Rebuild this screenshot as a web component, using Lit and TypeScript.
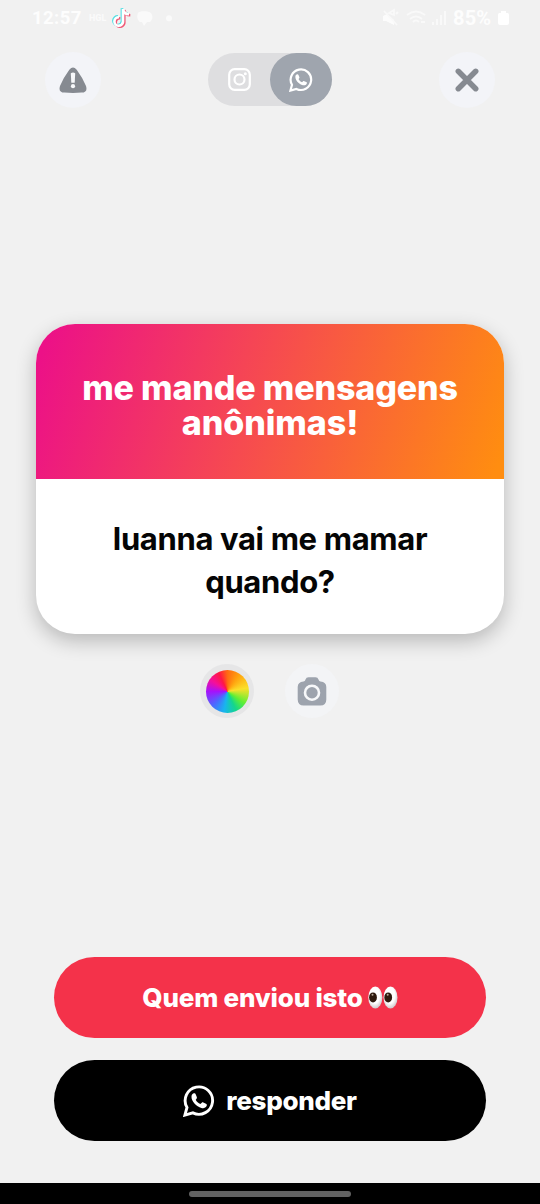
import { LitElement, html, css, svg } from "lit";
import { customElement } from "lit/decorators.js";

const whatsapp = svg`
  <path d="M1.9 30.1 L4 22.4 A13.7 13.7 0 1 1 9.9 27.9 Z" fill="none" stroke="#fff" stroke-width="2.9" stroke-linejoin="miter"/>
  <path d="M8.5 11.2 C8.7 9.5 9.7 8.3 11 8.2 C12 8.1 12.4 8.5 12.8 9.5 L13.8 12 C14.2 13 13.8 13.5 12.7 14.8 C13.7 16.8 15.3 18.2 17.4 19.1 L18.8 17.7 C19.2 17.3 19.7 17.2 20.3 17.5 L23 18.8 C24 19.3 24.1 20 23.6 21 C22.6 23 20.5 23.5 18.4 22.9 C13.5 21.4 8.1 16.4 8.5 11.2 Z" fill="#fff"/>`;

@customElement("app-root")
export class AppRoot extends LitElement {
  static styles = css`
    :host {
      display: flex;
      flex-direction: column;
      width: 540px;
      height: 1204px;
      overflow: hidden;
      background: #f1f1f1;
      font-family: Inter, "Liberation Sans", sans-serif;
    }
    svg { display: block; flex: none; }
    .status {
      height: 36px;
      box-sizing: border-box;
      padding: 0 31px 0 32px;
      display: flex;
      align-items: center;
      justify-content: space-between;
      color: #fdfdfd;
      font: 700 18.5px/36px Roboto, sans-serif;
    }
    .group { display: flex; align-items: center; }
    .clock { width: 57px; letter-spacing: 0.4px; }
    .carrier { width: 23px; font-size: 9px; font-weight: 900; color: #fafafa; }
    .battery { width: 45px; font-size: 20px; letter-spacing: 0.2px; }
    .top {
      height: 87px;
      padding: 0 45px 0 45px;
      display: grid;
      grid-template-columns: 56px 124px 56px;
      justify-content: space-between;
      align-items: center;
    }
    .round {
      width: 56px;
      height: 56px;
      border-radius: 50%;
      background: #f3f4f8;
      display: grid;
      place-items: center;
    }
    .toggle {
      display: flex;
      height: 53px;
      border-radius: 27px;
      background: #dedee0;
    }
    .seg { width: 62px; display: grid; place-items: center; border-radius: 27px; }
    .on { background: #9fa5ae; }
    .card {
      margin: 201px 36.4px 0;
      height: 310px;
      border-radius: 39px;
      overflow: hidden;
      background: #fff;
      box-shadow: 0 7px 20px rgba(0, 0, 0, 0.24);
      flex: none;
    }
    .head {
      height: 155px;
      box-sizing: border-box;
      padding-top: 46px;
      background: linear-gradient(108deg, #ec1187 3%, #f64a50 47%, #ff8d10 98%);
      color: #fff;
      text-align: center;
      font-weight: 800;
      font-size: 34px;
      line-height: 35px;
    }
    .line { display: block; white-space: nowrap; }
    .t1 { letter-spacing: -0.15px; }
    .t2 { letter-spacing: -0.05px; }
    .body {
      padding-top: 38px;
      text-align: center;
      color: #050505;
      font-weight: 650;
      font-size: 31px;
      line-height: 43px;
      letter-spacing: -0.35px;
    }
    .tools {
      display: flex;
      justify-content: center;
      gap: 31px;
      margin: 30px 1px 0 0;
      height: 54px;
    }
    .tool { width: 54px; height: 54px; border-radius: 50%; display: grid; place-items: center; background: #f3f4f6; }
    .ring { background: #e6e6e7; }
    .wheel {
      width: 43px;
      height: 43px;
      border-radius: 50%;
      background: conic-gradient(#ff6a12, #ffa20f 35deg, #fbe02b 80deg, #5fef35 125deg, #14d68c 155deg, #18b5ee 190deg, #4a6bff 225deg, #a512fb 270deg, #f50f9a 305deg, #ff1744 335deg, #ff6a12);
    }
    .actions {
      margin-top: auto;
      padding: 0 54px 42px;
      display: grid;
      gap: 22px;
    }
    .btn {
      height: 81px;
      border-radius: 41px;
      display: flex;
      align-items: center;
      justify-content: center;
      color: #fff;
      font-weight: 800;
      font-size: 26px;
      white-space: nowrap;
    }
    .red { background: #f4324a; gap: 5px; }
    .black { background: #000; gap: 11px; }
    .q { letter-spacing: -0.2px; }
    .r { letter-spacing: -0.3px; }
    .nav { height: 21px; background: #000; display: grid; place-items: center; flex: none; }
    .pill { width: 162px; height: 6px; border-radius: 3px; background: #626262; }
  `;

  render() {
    return html`
      <div class="status">
        <div class="group">
          <span class="clock">12:57</span>
          <span class="carrier">HGL</span>
          <svg width="20" height="22" viewBox="0 0 20 22" fill="none" stroke-width="2.6">
            <path d="M11 2V15A4.3 4.3 0 1 1 7 10.2M11 2C11.4 5.2 13.5 7.2 17 7.3" stroke="#57dfe4" transform="translate(-1.1 -.8)"/>
            <path d="M11 2V15A4.3 4.3 0 1 1 7 10.2M11 2C11.4 5.2 13.5 7.2 17 7.3" stroke="#ee5b78" transform="translate(1.3 1)"/>
            <path d="M11 2V15A4.3 4.3 0 1 1 7 10.2M11 2C11.4 5.2 13.5 7.2 17 7.3" stroke="#fff"/>
          </svg>
          <svg width="48" height="20" viewBox="0 0 48 20" fill="#fafafa">
            <path d="M6 5C7 2.500 17 2.500 19 5C21 8 21 11 18 14H15L12 18L10 14H8C4.500 11.500 5 7 6 5Z"/>
            <circle cx="37" cy="10.200" r="3"/>
          </svg>
        </div>
        <div class="group">
          <svg width="71" height="22" viewBox="0 0 71 22" fill="none" stroke="#f9f9f9" stroke-width="1.800">
            <path d="M1 9V14H4L12 18V13L5 7Z" fill="#fcfcfc" stroke="none"/>
            <path d="M7 6L12 3V8ZM2 4L15 18M14 7L16 5"/>
            <path d="M25 8Q34 1 43 8M28 12Q34 7 40 12M31 15Q34 12 37 15M39 15H43"/>
            <path d="M51 18V15M55 18V12M59 18V8M63 18V4" stroke-width="2"/>
          </svg>
          <span class="battery">85%</span>
          <svg width="11" height="16" viewBox="0 0 11 16" fill="#fff"><path d="M3 1H8V3H9.500Q11 3 11 5V13Q11 15 9 15H2Q0 15 0 13V5Q0 3 1.500 3H3Z"/></svg>
        </div>
      </div>

      <div class="top">
        <div class="round">
          <svg width="28" height="26" viewBox="0 0 28 26">
            <path d="M10.300 2.700Q14-1.600 17.700 2.700Q23.500 10.500 27 19Q29 25.300 22.500 25.600Q14 26.200 5.500 25.600Q-1 25.300 1 19Q4.500 10.500 10.300 2.700Z" fill="#868a91"/>
            <path d="M11.800 6.200Q14 5 16.200 6.200L15.700 15.800H12.300Z" fill="#f7f8fb"/>
            <circle cx="14" cy="19.200" r="2.100" fill="#f7f8fb"/>
          </svg>
        </div>
        <div class="toggle">
          <div class="seg">
            <svg width="23" height="23" viewBox="0 0 23 23" fill="none" stroke="#fff" stroke-width="2.200">
              <rect x="1.200" y="1.200" width="20.600" height="20.600" rx="5.500"/>
              <circle cx="11.500" cy="11.500" r="5"/>
              <circle cx="17.300" cy="5.700" r="1.500" fill="#fff" stroke="none"/>
            </svg>
          </div>
          <div class="seg on">
            <svg width="24" height="24" viewBox="0 0 32 32">${whatsapp}</svg>
          </div>
        </div>
        <div class="round">
          <svg width="24" height="24" viewBox="0 0 24 24"><path d="M3.300 3.300L20.700 20.700M20.700 3.300L3.300 20.700" stroke="#868a91" stroke-width="5.500" stroke-linecap="round"/></svg>
        </div>
      </div>

      <div class="card">
        <div class="head">
          <span class="line t1">me mande mensagens</span>
          <span class="line t2">anônimas!</span>
        </div>
        <div class="body">
          <span class="line">luanna vai me mamar</span>
          <span class="line">quando?</span>
        </div>
      </div>

      <div class="tools">
        <div class="tool ring"><div class="wheel"></div></div>
        <div class="tool">
          <svg width="30" height="29" viewBox="0 0 30 29">
            <path d="M6.500 4.500Q8 4.300 8.500 2.500Q9.200.300 11.500.300H18.500Q20.800.300 21.500 2.500Q22 4.300 23.500 4.500Q29.300 5 29.300 10V22.500Q29.300 28.500 23.300 28.500H6.700Q.700 28.500.700 22.500V10Q.700 5 6.500 4.500Z" fill="#9da3ad"/>
            <circle cx="15" cy="15.700" r="7" fill="#9da3ad" stroke="#f7f8fa" stroke-width="2.600"/>
          </svg>
        </div>
      </div>

      <div class="actions">
        <div class="btn red">
          <span class="q">Quem enviou isto</span>
          <svg width="30" height="23" viewBox="0 0 30 23" role="img">
            <defs>
              <radialGradient id="w" cx=".45" cy=".4" r=".6">
                <stop offset=".6" stop-color="#fff"/><stop offset="1" stop-color="#cfc9cb"/>
              </radialGradient>
            </defs>
            <ellipse cx="7.300" cy="11.500" rx="7" ry="11" fill="url(#w)"/>
            <ellipse cx="22.500" cy="11.500" rx="7" ry="11" fill="url(#w)"/>
            <ellipse cx="5" cy="11.400" rx="3.900" ry="5" fill="#2e1a0e"/>
            <ellipse cx="20.200" cy="11.400" rx="3.900" ry="5" fill="#2e1a0e"/>
            <circle cx="4.500" cy="8.800" r="1" fill="#b8a99b"/>
            <circle cx="19.700" cy="8.800" r="1" fill="#b8a99b"/>
          </svg>
        </div>
        <div class="btn black">
          <svg width="32" height="32" viewBox="0 0 32 32">${whatsapp}</svg>
          <span class="r">responder</span>
        </div>
      </div>
      <div class="nav"><div class="pill"></div></div>
    `;
  }
}
